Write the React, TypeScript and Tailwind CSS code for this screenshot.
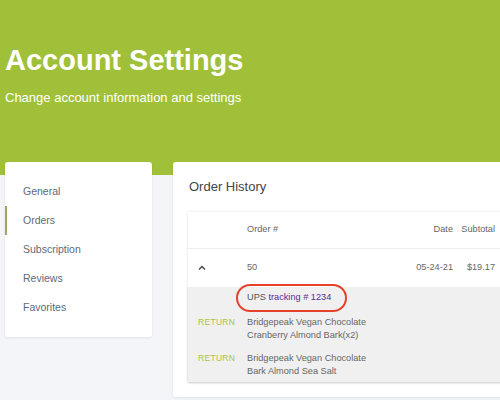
import React from "react";

const nav = ["General", "Orders", "Subscription", "Reviews", "Favorites"];

const items = [
  ["Bridgepeak Vegan Chocolate", "Cranberry Almond Bark(x2)"],
  ["Bridgepeak Vegan Chocolate", "Bark Almond Sea Salt"],
];

function Sidebar() {
  return (
    <div className="w-[147px] shrink-0 h-[175px] bg-white rounded-[3px] shadow-[0_1px_3px_rgba(0,0,0,0.08)] pt-[15px]">
      {nav.map((n) => (
        <div key={n} className="relative h-[29px] flex items-center pl-[18px] text-[10.5px] text-[#5e6a78]">
          {n === "Orders" && <span className="absolute left-0 top-0 h-full w-[2px] bg-[#9ba56c]" />}
          {n}
        </div>
      ))}
    </div>
  );
}

function OrderTable() {
  return (
    <div className="mt-[17px] w-[330px] bg-white shadow-[0_0_3px_rgba(0,0,0,0.12)] text-[9.2px] text-[#666]">
      <div className="flex items-center h-[37px] border-b border-[#eeeeee]">
        <div className="w-[59px]" />
        <div className="flex-1">Order #</div>
        <div className="w-[60px] text-right">Date</div>
        <div className="w-[42px] text-right">Subtotal</div>
        <div className="w-[23px]" />
      </div>
      <div className="flex items-center h-[38px]">
        <div className="w-[59px] pl-[9px]">
          <svg width="10" height="10" viewBox="0 0 10 10" fill="none" stroke="#444" strokeWidth="1.4">
            <path d="M2 6.5 L5 3.5 L8 6.5" />
          </svg>
        </div>
        <div className="flex-1">50</div>
        <div className="w-[60px] text-right">05-24-21</div>
        <div className="w-[42px] text-right">$19.17</div>
        <div className="w-[23px]" />
      </div>
      <div className="bg-[#f0f0f0] pb-[4px] shadow-[0_1px_2px_rgba(0,0,0,0.15)]">
        <div className="relative -mt-[3px] ml-[48px] inline-flex items-center h-[28px] pl-[9px] pr-[14px] border-2 border-[#e5412b] rounded-full text-[#555]">
          UPS&nbsp;<span className="text-[#5a2d8e]">tracking # 1234</span>
        </div>
        <div className="flex flex-col gap-[10px] mt-[4px]">
          {items.map((it, i) => (
            <div key={i} className="flex leading-[13px]">
              <div className="w-[59px] pl-[10px] text-[8.5px] tracking-[0.3px] text-[#aac43f]">RETURN</div>
              <div>
                <div>{it[0]}</div>
                <div>{it[1]}</div>
              </div>
            </div>
          ))}
        </div>
      </div>
    </div>
  );
}

export default function App() {
  return (
    <div className="w-[500px] h-[400px] overflow-hidden bg-[#f4f5f8]" style={{ fontFamily: '"Liberation Sans", Arial, sans-serif' }}>
      <div className="h-[175px] bg-[#a1c03a] pl-[5px] pt-[42px] text-white">
        <h1 className="text-[29px] font-bold leading-[36px]">Account Settings</h1>
        <p className="text-[13px] mt-[12px] leading-[16px]">Change account information and settings</p>
      </div>
      <div className="-mt-[13px] flex gap-[21px] pl-[5px]">
        <Sidebar />
        <div className="w-[345px] shrink-0 h-[235px] bg-white rounded-[3px] shadow-[0_1px_3px_rgba(0,0,0,0.08)] pl-[15px] pt-[17px]">
          <div className="text-[13px] text-[#444] leading-[16px] pl-[1px]">Order History</div>
          <OrderTable />
        </div>
      </div>
    </div>
  );
}
